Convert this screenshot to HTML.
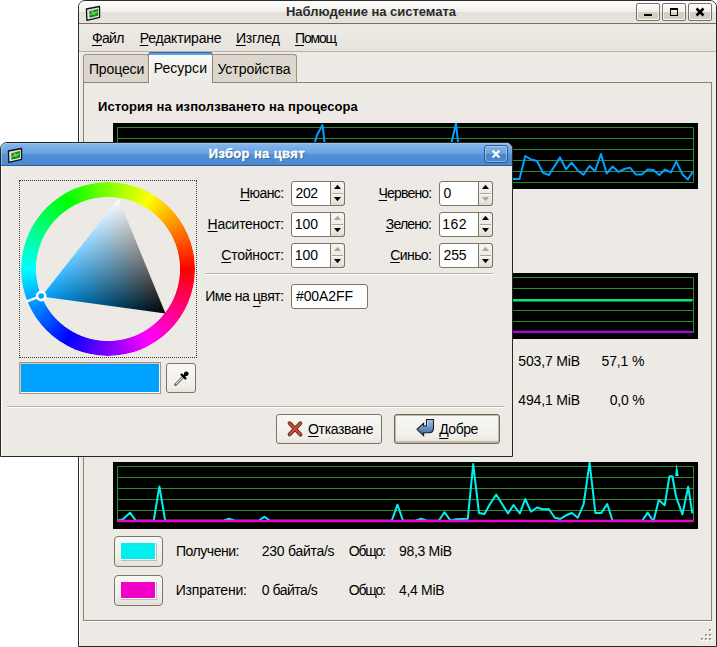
<!DOCTYPE html>
<html><head><meta charset="utf-8">
<style>
*{box-sizing:border-box}
html,body{margin:0;padding:0}
body{width:717px;height:647px;position:relative;overflow:hidden;background:#fff;font-family:"Liberation Sans",sans-serif;font-size:14px;color:#000}
.a{position:absolute}
.t{position:absolute;white-space:pre;line-height:1;}
.b{font-weight:bold}
u{text-decoration:underline;text-decoration-thickness:1px;text-underline-offset:2.4px;text-decoration-skip-ink:none}
</style></head><body>

<!-- ===== MAIN WINDOW ===== -->
<div class="a" style="left:78px;top:0;width:639px;height:647px;background:#edeae5;border:1px solid #2b2a28;border-radius:7px 7px 0 0;"></div>
<div class="a" style="left:79px;top:24px;width:1px;height:622px;background:#fff"></div>
<!-- title bar -->
<div class="a" style="left:79px;top:1px;width:637px;height:22px;border-radius:6px 6px 0 0;background:linear-gradient(#fdfdfc,#f2f0ec 48%,#e5e1da 50%,#e7e3dd)"></div>
<div class="a" style="left:79px;top:23px;width:637px;height:1px;background:#756d5e"></div>
<!-- title icon -->
<svg class="a" style="left:85px;top:5px" width="16" height="16" viewBox="0 0 16 16">
 <defs><linearGradient id="scr" x1="0" y1="1" x2="1" y2="0"><stop offset="0" stop-color="#005c00"/><stop offset="0.5" stop-color="#1a9a1a"/><stop offset="1" stop-color="#0a7a0a"/></linearGradient></defs>
 <path d="M1.4 4 L14.5 1.5 L14.6 12.4 L1.9 15.3 Z" fill="#e4e4e4" stroke="#101010" stroke-width="1.3" stroke-linejoin="round"/>
 <path d="M4.3 6.3 L12.9 4.1 L13.1 10.7 L4.6 12.4 Z" fill="url(#scr)"/>
 <path d="M5 10.2 L6.8 9 L7.8 6.8 L8.8 9.3 L10.3 7.6 L12.4 6.6" fill="none" stroke="#7fe07f" stroke-width="1.2" opacity=".9"/>
</svg>
<div class="t b" style="left:286.00px;top:5px;color:#2a2a2a;font-size:13px;letter-spacing:-0.023px">Наблюдение на системата</div>
<!-- window buttons -->
<div class="a" style="left:636px;top:3px;width:24px;height:18px;border:1px solid #75736e;border-radius:2px;background:linear-gradient(#fcfcfb,#f0eeea 50%,#d6cec1 51%,#d6cec1 90%,#ece8e2);box-shadow:inset 0 0 0 1px rgba(255,255,255,.6)"></div>
<div class="a" style="left:662px;top:3px;width:24px;height:18px;border:1px solid #75736e;border-radius:2px;background:linear-gradient(#fcfcfb,#f0eeea 50%,#d6cec1 51%,#d6cec1 90%,#ece8e2);box-shadow:inset 0 0 0 1px rgba(255,255,255,.6)"></div>
<div class="a" style="left:688px;top:3px;width:24px;height:18px;border:1px solid #75736e;border-radius:2px;background:linear-gradient(#fcfcfb,#f0eeea 50%,#d6cec1 51%,#d6cec1 90%,#ece8e2);box-shadow:inset 0 0 0 1px rgba(255,255,255,.6)"></div>
<div class="a" style="left:644px;top:14px;width:8px;height:2px;background:#000"></div>
<div class="a" style="left:670px;top:8px;width:8px;height:8px;border:1px solid #000;border-top-width:2px"></div>
<svg class="a" style="left:695px;top:7px" width="10" height="10" viewBox="0 0 10 10"><path d="M1.5 1.5L8.5 8.5M8.5 1.5L1.5 8.5" stroke="#000" stroke-width="2.5"/></svg>

<!-- menubar -->
<div class="a" style="left:79px;top:24px;width:637px;height:27px;background:linear-gradient(#eeebe6,#e7e3dd)"></div>
<div class="a" style="left:79px;top:51px;width:637px;height:1px;background:#b9b1a4"></div>
<div class="t" style="left:91.90px;top:30.5px;letter-spacing:-0.633px"><u>Ф</u>айл</div>
<div class="t" style="left:139.70px;top:30.5px;letter-spacing:-0.190px"><u>Р</u>едактиране</div>
<div class="t" style="left:235.90px;top:30.5px;letter-spacing:-0.220px"><u>И</u>зглед</div>
<div class="t" style="left:295.00px;top:30.5px;letter-spacing:-1.200px"><u>П</u>омощ</div>

<!-- tabs -->
<div class="a" style="left:83px;top:54px;width:66px;height:29px;background:#dcd6cd;border:1px solid #9a9282;border-bottom:none;border-radius:3px 3px 0 0"></div>
<div class="a" style="left:211px;top:54px;width:86px;height:29px;background:#dcd6cd;border:1px solid #9a9282;border-bottom:none;border-radius:3px 3px 0 0"></div>
<div class="a" style="left:83px;top:82px;width:629px;height:539px;border:1px solid #8a8272;background:#edeae5"></div>
<div class="a" style="left:84px;top:621px;width:628px;height:1px;background:#fff"></div>
<div class="a" style="left:148px;top:52px;width:65px;height:31px;background:linear-gradient(#5c9ddf,#5c9ddf 2px,#fbfbf9 2px,#f1efeb 60%,#ecebe6);border:1px solid #8d8574;border-top-color:#2f67a8;border-bottom:none;border-radius:3px 3px 0 0"></div>
<div class="a" style="left:149px;top:55px;width:1px;height:27px;background:#fff"></div>
<div class="t" style="left:88.90px;top:61.5px;letter-spacing:-0.117px">Процеси</div>
<div class="t" style="left:153.70px;top:60.5px;letter-spacing:0.050px">Ресурси</div>
<div class="t" style="left:217.40px;top:61.5px;letter-spacing:-0.02px">Устройства</div>

<!-- resize grip -->
<svg class="a" style="left:700px;top:628px" width="14" height="14">
 <g><rect x="10" y="2" width="2" height="2" fill="#fff"/><path d="M9 1h2.2l-2.2 2.2z" fill="#857d6c"/><rect x="9" y="1" width="1.6" height="1.6" fill="#8f8775"/><rect x="6" y="7" width="2" height="2" fill="#fff"/><path d="M5 6h2.2l-2.2 2.2z" fill="#857d6c"/><rect x="5" y="6" width="1.6" height="1.6" fill="#8f8775"/><rect x="10" y="7" width="2" height="2" fill="#fff"/><path d="M9 6h2.2l-2.2 2.2z" fill="#857d6c"/><rect x="9" y="6" width="1.6" height="1.6" fill="#8f8775"/><rect x="2" y="11" width="2" height="2" fill="#fff"/><path d="M1 10h2.2l-2.2 2.2z" fill="#857d6c"/><rect x="1" y="10" width="1.6" height="1.6" fill="#8f8775"/><rect x="6" y="11" width="2" height="2" fill="#fff"/><path d="M5 10h2.2l-2.2 2.2z" fill="#857d6c"/><rect x="5" y="10" width="1.6" height="1.6" fill="#8f8775"/><rect x="10" y="11" width="2" height="2" fill="#fff"/><path d="M9 10h2.2l-2.2 2.2z" fill="#857d6c"/><rect x="9" y="10" width="1.6" height="1.6" fill="#8f8775"/></g>
</svg>

<!-- content -->
<div class="t b" style="left:98.00px;top:100px;font-size:13px;letter-spacing:0.089px">История на използването на процесора</div>

<!-- graph 1 -->
<svg class="a" style="left:113px;top:123px" width="585" height="66">
 <rect width="585" height="66" fill="#000"/>
 <g stroke="#2e8b2e" stroke-width="1" fill="none">
  <path d="M4.5 4.5H580.5V59.5H4.5Z"/>
  <path d="M4.5 15.5H580.5M4.5 26.5H580.5M4.5 37.5H580.5M4.5 48.5H580.5"/>
 </g>
 <polyline fill="none" stroke="#00a2ff" stroke-width="2" stroke-linejoin="round" points="202,19 204,12 209.5,2 211.5,19"/>
 <polyline fill="none" stroke="#00a2ff" stroke-width="2" stroke-linejoin="round" points="338.6,19 343,0.5 345,19"/>
 <polyline fill="none" stroke="#00a2ff" stroke-width="2" stroke-linejoin="round" points="395,56 406.5,56 412.3,33 418,36.5 424,38 430,49.8 436,52 447,34.4 453,46.3 458.6,39.6 465,47.7 470.5,51.6 476.5,43 482,48 488,31 493.7,50.5 499.6,43.5 505.5,48.8 511.4,46 517,44.6 523,51.6 528.8,51.6 534.7,46.6 540.4,47 546.3,51.9 552,46.6 557.9,49.4 563.4,38.6 569.3,51.2 574.9,56.5 579.7,48.8"/>
</svg>

<!-- graph 2 -->
<svg class="a" style="left:113px;top:273px" width="585" height="66">
 <rect width="585" height="66" fill="#000"/>
 <g stroke="#2e8b2e" stroke-width="1" fill="none">
  <path d="M4.5 4.5H580.5V59.5H4.5Z"/>
  <path d="M4.5 15.5H580.5M4.5 26.5H580.5M4.5 37.5H580.5M4.5 48.5H580.5"/>
 </g>
 <path d="M4.5 27.4H579.5" stroke="#00f07a" stroke-width="2.3"/>
 <path d="M4.5 58.9H579.5" stroke="#b000f0" stroke-width="2.1"/>
</svg>
<div class="t" style="left:518.30px;top:353.5px;letter-spacing:-0.162px">503,7 MiB</div>
<div class="t" style="left:601.50px;top:353.5px;letter-spacing:-0.120px">57,1 %</div>
<div class="t" style="left:518.30px;top:392.5px;letter-spacing:-0.162px">494,1 MiB</div>
<div class="t" style="left:609.70px;top:392.5px;letter-spacing:-0.200px">0,0 %</div>

<!-- graph 3 -->
<svg class="a" style="left:113px;top:462px" width="585" height="67">
 <rect width="585" height="67" fill="#000"/>
 <g stroke="#2e8b2e" stroke-width="1" fill="none">
  <path d="M4.5 4.5H580.5V59.5H4.5Z"/>
  <path d="M4.5 15.5H580.5M4.5 26.5H580.5M4.5 37.5H580.5M4.5 48.5H580.5"/>
 </g>
 <polyline fill="none" stroke="#00f0f0" stroke-width="2" stroke-linejoin="round" points="4.5,58.8 10,57.3 17,50.7 23,58.8 40.7,58.8 46.4,24.4 52.2,58.8 110.5,58.8 116,56.8 121.8,58.8 145.6,58.8 151.4,54.7 157,58.8 278.7,58.8 284.5,42.7 290,58.8 302.6,58.8 308.1,56.8 313.9,58.8 325.7,58.8 331.4,50.2 337.7,58.8 343,57.3 354.8,56.7 360.2,2 366,51.1 371.5,52 377.3,41.5 383.2,32.5 395,51.5 400.5,43 406.8,51.5 412.2,37 418,49.7 424,45.5 429.5,47.3 435.8,47 441.8,55.7 447.2,57 453,53.3 458.9,51 464.8,55.7 470.6,42.4 476.6,0.7 482.4,51.1 488.2,51.1 494.2,42 499.6,58.8 529.2,58.8 534.6,50.6 540.4,59.5 545.8,37.9 551.7,43.3 556.4,14.3 559.4,14.3 563,34.3 569.4,52.4 575.2,24.8 579.4,51.5"/>
 <polygon points="562.2,14 563.4,1.6 565.8,14" fill="#00f0f0"/>
 <path d="M4.5 59H580.5" stroke="#f000c8" stroke-width="2.4"/>
</svg>
<!-- legend buttons -->
<div class="a" style="left:114px;top:536px;width:49px;height:31px;border:1px solid #7d7566;border-radius:4px;background:linear-gradient(#f8f7f4,#efede8 70%,#e4e0d8)"></div>
<div class="a" style="left:121px;top:543px;width:36px;height:18px;border-right:1px solid #c2bdb3;border-bottom:1px solid #c2bdb3;background:#00f0f0;box-shadow:inset -1px -1px 0 #fff"></div>
<div class="a" style="left:114px;top:575px;width:49px;height:31px;border:1px solid #7d7566;border-radius:4px;background:linear-gradient(#f8f7f4,#efede8 70%,#e4e0d8)"></div>
<div class="a" style="left:121px;top:582px;width:36px;height:18px;border-right:1px solid #c2bdb3;border-bottom:1px solid #c2bdb3;background:#f000c8;box-shadow:inset -1px -1px 0 #fff"></div>
<div class="t" style="left:176.00px;top:543.5px;letter-spacing:-0.475px">Получени:</div>
<div class="t" style="left:261.80px;top:543.5px;letter-spacing:-0.270px">230 байта/s</div>
<div class="t" style="left:348.75px;top:543.5px;letter-spacing:-1.200px">Общо:</div>
<div class="t" style="left:398.90px;top:543.5px;letter-spacing:-0.286px">98,3 MiB</div>
<div class="t" style="left:175.70px;top:582.5px;letter-spacing:-0.167px">Изпратени:</div>
<div class="t" style="left:261.80px;top:582.5px;letter-spacing:-0.488px">0 байта/s</div>
<div class="t" style="left:348.75px;top:582.5px;letter-spacing:-1.200px">Общо:</div>
<div class="t" style="left:398.90px;top:582.5px;letter-spacing:-0.300px">4,4 MiB</div>

<!-- ===== DIALOG ===== -->
<div id="dlg" class="a" style="left:0;top:142px;width:513px;height:315px;background:#edeae5;border:1px solid #262626;border-radius:7px 7px 0 0"></div>
<div class="a" style="left:1px;top:143px;width:511px;height:22px;border-radius:6px 6px 0 0;background:linear-gradient(#a6cbf3,#80b3ea 8%,#6ca3e0 45%,#5190d6 55%,#4b8ad2);box-shadow:inset 1px 0 0 rgba(255,255,255,.35)"></div>
<div class="a" style="left:1px;top:165px;width:511px;height:1px;background:#2f5f96"></div>
<div class="a" style="left:1px;top:166px;width:1px;height:290px;background:#fff"></div>
<svg class="a" style="left:7px;top:147px" width="16" height="16" viewBox="0 0 16 16">
 <defs><linearGradient id="scr2" x1="0" y1="1" x2="1" y2="0"><stop offset="0" stop-color="#005c00"/><stop offset="0.5" stop-color="#1a9a1a"/><stop offset="1" stop-color="#0a7a0a"/></linearGradient></defs>
 <path d="M1.4 4 L14.5 1.5 L14.6 12.4 L1.9 15.3 Z" fill="#e4e4e4" stroke="#101010" stroke-width="1.3" stroke-linejoin="round"/>
 <path d="M4.3 6.3 L12.9 4.1 L13.1 10.7 L4.6 12.4 Z" fill="url(#scr2)"/>
 <path d="M5 10.2 L6.8 9 L7.8 6.8 L8.8 9.3 L10.3 7.6 L12.4 6.6" fill="none" stroke="#7fe07f" stroke-width="1.2" opacity=".9"/>
</svg>
<div class="t b" style="left:208.70px;top:147px;color:#fff;-webkit-text-stroke:0.35px #fff;text-shadow:1px 1px 0.6px rgba(20,40,80,.6);font-size:13px;letter-spacing:0.367px">Избор на цвят</div>
<div class="a" style="left:484px;top:145px;width:24px;height:18px;border:1px solid #2f5a8a;border-radius:3px;background:linear-gradient(#7eb0e6,#6aa2df 50%,#4a84c6 51%,#4d88ca);box-shadow:inset 0 0 0 1px rgba(255,255,255,.35)"></div>
<svg class="a" style="left:491px;top:149px" width="10" height="10" viewBox="0 0 10 10"><path d="M1.5 1.5L8.5 8.5M8.5 1.5L1.5 8.5" stroke="#fff" stroke-width="2.2"/></svg>

<!-- color wheel -->
<div class="a" style="left:19px;top:180px;width:178px;height:178px;border:1px dotted #3a3a3a"></div>
<div class="a" style="left:21px;top:182px;width:174px;height:174px;border-radius:50%;background:conic-gradient(from 90deg,#f00,#f0f,#00f,#0ff,#0f0,#ff0,#f00);-webkit-mask:radial-gradient(circle closest-side,transparent 71.6px,#000 72.4px);mask:radial-gradient(circle closest-side,transparent 71.6px,#000 72.4px)"></div>
<svg class="a" style="left:21px;top:182px" width="174" height="174" viewBox="0 0 174 174">
 <defs>
  <linearGradient id="gH" gradientUnits="userSpaceOnUse" x1="20.5" y1="114.5" x2="120.8" y2="73.5"><stop offset="0" stop-color="#00a2ff"/><stop offset="1" stop-color="#000"/></linearGradient>
  <linearGradient id="gW" gradientUnits="userSpaceOnUse" x1="97.5" y1="16.5" x2="82.9" y2="123.05"><stop offset="0" stop-color="#fff"/><stop offset="1" stop-color="#000"/></linearGradient>
  <clipPath id="ring"><path fill-rule="evenodd" d="M87 0A87 87 0 1 1 86.99 0ZM87 15A72 72 0 1 0 87.01 15Z"/></clipPath>
 </defs>
 <clipPath id="tri"><polygon points="20.5,114.5 97.5,16.5 144.5,131.5"/></clipPath>
 <g style="isolation:isolate" clip-path="url(#tri)">
  <rect x="0" y="0" width="174" height="174" fill="url(#gH)"/>
  <rect x="0" y="0" width="174" height="174" fill="url(#gW)" style="mix-blend-mode:plus-lighter"/>
 </g>
 <line x1="20.24" y1="113.97" x2="5.34" y2="119.59" stroke="#fff" stroke-width="2.4"/>
 <circle cx="20.2" cy="114" r="4.1" fill="#00a2ff" stroke="#fff" stroke-width="2.6"/>
</svg>
<!-- swatch + eyedropper -->
<div class="a" style="left:19px;top:362px;width:142px;height:32px;border:1px solid #a1978a;box-shadow:inset 1px 1px 0 #d6cab6,inset -1px -1px 0 #fff;background:#00a2ff"></div>
<div class="a" style="left:166px;top:363px;width:30px;height:30px;border:1px solid #7d7566;border-radius:3px;background:linear-gradient(#f8f7f4,#f0eee9 80%,#e6e2db)"></div>
<svg class="a" style="left:173px;top:370px" width="17" height="17" viewBox="0 0 17 17">
 <path d="M2.6 14.6 L11 6.2" stroke="#3a3a3a" stroke-width="2.6" stroke-linecap="round"/>
 <path d="M3 14.2 L10.6 6.6" stroke="#fafafa" stroke-width="1.1" stroke-linecap="round"/>
 <path d="M8.6 4.6 L12.4 8.4" stroke="#000" stroke-width="2.2" stroke-linecap="round"/>
 <circle cx="13.3" cy="3.7" r="2.3" fill="#000"/>
 <path d="M11 6 L13 4" stroke="#000" stroke-width="2.4"/>
</svg>
<!-- separators -->
<div class="a" style="left:205px;top:273px;width:288px;height:1px;background:#bab4a9"></div>
<div class="a" style="left:205px;top:274px;width:288px;height:1px;background:#fff"></div>
<div class="a" style="left:7px;top:406px;width:498px;height:1px;background:#bab4a9"></div>
<div class="a" style="left:7px;top:407px;width:498px;height:1px;background:#fff"></div>
<div class="a" style="left:291px;top:181px;width:54px;height:25px;border:1px solid #7d7566;border-radius:3px;background:#fff"></div>
<div class="a" style="left:330px;top:181px;width:15px;height:25px;border:1px solid #7d7566;border-radius:0 3px 3px 0;background:linear-gradient(#f5f4f0,#e9e6e0 85%,#dcd8d0)"></div>
<div class="a" style="left:332px;top:193px;width:11px;height:1px;background:#aba699"></div><div class="a" style="left:332px;top:194px;width:11px;height:1px;background:#fbfaf8"></div>
<svg class="a" style="left:333px;top:181px" width="9" height="25" viewBox="0 0 9 25"><path d="M1 8L4.5 3.8L8 8Z" fill="#000"/><path d="M1 16L4.5 20.2L8 16Z" fill="#000"/></svg>
<div class="t" style="left:295.50px;top:185.5px;letter-spacing:-0.350px">202</div>
<div class="a" style="left:439px;top:181px;width:54px;height:25px;border:1px solid #7d7566;border-radius:3px;background:#fff"></div>
<div class="a" style="left:478px;top:181px;width:15px;height:25px;border:1px solid #7d7566;border-radius:0 3px 3px 0;background:linear-gradient(#f5f4f0,#e9e6e0 85%,#dcd8d0)"></div>
<div class="a" style="left:480px;top:193px;width:11px;height:1px;background:#aba699"></div><div class="a" style="left:480px;top:194px;width:11px;height:1px;background:#fbfaf8"></div>
<svg class="a" style="left:481px;top:181px" width="9" height="25" viewBox="0 0 9 25"><path d="M1 8L4.5 3.8L8 8Z" fill="#000"/><path d="M1 16L4.5 20.2L8 16Z" fill="#aaa69e"/></svg>
<div class="t" style="left:443.60px;top:185.5px;letter-spacing:-1.200px">0</div>
<div class="t" style="top:185.5px;left:240.05px;letter-spacing:-0.600px"><u>Н</u>юанс:</div>
<div class="t" style="top:185.5px;left:378.61px;letter-spacing:-0.843px"><u>Ч</u>ервено:</div>
<div class="a" style="left:291px;top:212px;width:54px;height:25px;border:1px solid #7d7566;border-radius:3px;background:#fff"></div>
<div class="a" style="left:330px;top:212px;width:15px;height:25px;border:1px solid #7d7566;border-radius:0 3px 3px 0;background:linear-gradient(#f5f4f0,#e9e6e0 85%,#dcd8d0)"></div>
<div class="a" style="left:332px;top:224px;width:11px;height:1px;background:#aba699"></div><div class="a" style="left:332px;top:225px;width:11px;height:1px;background:#fbfaf8"></div>
<svg class="a" style="left:333px;top:212px" width="9" height="25" viewBox="0 0 9 25"><path d="M1 8L4.5 3.8L8 8Z" fill="#aaa69e"/><path d="M1 16L4.5 20.2L8 16Z" fill="#000"/></svg>
<div class="t" style="left:294.70px;top:216.5px;letter-spacing:0.050px">100</div>
<div class="a" style="left:439px;top:212px;width:54px;height:25px;border:1px solid #7d7566;border-radius:3px;background:#fff"></div>
<div class="a" style="left:478px;top:212px;width:15px;height:25px;border:1px solid #7d7566;border-radius:0 3px 3px 0;background:linear-gradient(#f5f4f0,#e9e6e0 85%,#dcd8d0)"></div>
<div class="a" style="left:480px;top:224px;width:11px;height:1px;background:#aba699"></div><div class="a" style="left:480px;top:225px;width:11px;height:1px;background:#fbfaf8"></div>
<svg class="a" style="left:481px;top:212px" width="9" height="25" viewBox="0 0 9 25"><path d="M1 8L4.5 3.8L8 8Z" fill="#000"/><path d="M1 16L4.5 20.2L8 16Z" fill="#000"/></svg>
<div class="t" style="left:442.30px;top:216.5px;letter-spacing:0.450px">162</div>
<div class="t" style="top:216.5px;left:207.61px;letter-spacing:-0.300px"><u>Н</u>аситеност:</div>
<div class="t" style="top:216.5px;left:385.74px;letter-spacing:-0.817px"><u>З</u>елено:</div>
<div class="a" style="left:291px;top:243px;width:54px;height:25px;border:1px solid #7d7566;border-radius:3px;background:#fff"></div>
<div class="a" style="left:330px;top:243px;width:15px;height:25px;border:1px solid #7d7566;border-radius:0 3px 3px 0;background:linear-gradient(#f5f4f0,#e9e6e0 85%,#dcd8d0)"></div>
<div class="a" style="left:332px;top:255px;width:11px;height:1px;background:#aba699"></div><div class="a" style="left:332px;top:256px;width:11px;height:1px;background:#fbfaf8"></div>
<svg class="a" style="left:333px;top:243px" width="9" height="25" viewBox="0 0 9 25"><path d="M1 8L4.5 3.8L8 8Z" fill="#aaa69e"/><path d="M1 16L4.5 20.2L8 16Z" fill="#000"/></svg>
<div class="t" style="left:294.70px;top:247.5px;letter-spacing:0.050px">100</div>
<div class="a" style="left:439px;top:243px;width:54px;height:25px;border:1px solid #7d7566;border-radius:3px;background:#fff"></div>
<div class="a" style="left:478px;top:243px;width:15px;height:25px;border:1px solid #7d7566;border-radius:0 3px 3px 0;background:linear-gradient(#f5f4f0,#e9e6e0 85%,#dcd8d0)"></div>
<div class="a" style="left:480px;top:255px;width:11px;height:1px;background:#aba699"></div><div class="a" style="left:480px;top:256px;width:11px;height:1px;background:#fbfaf8"></div>
<svg class="a" style="left:481px;top:243px" width="9" height="25" viewBox="0 0 9 25"><path d="M1 8L4.5 3.8L8 8Z" fill="#aaa69e"/><path d="M1 16L4.5 20.2L8 16Z" fill="#000"/></svg>
<div class="t" style="left:443.60px;top:247.5px;letter-spacing:-0.200px">255</div>
<div class="t" style="top:247.5px;left:221.29px;letter-spacing:-0.238px"><u>С</u>тойност:</div>
<div class="t" style="top:247.5px;left:390.24px;letter-spacing:-0.580px"><u>С</u>иньо:</div>

<div class="t" style="left:205.20px;top:288.5px;letter-spacing:-0.455px">Име на <u style="text-underline-offset:4.6px">ц</u>вят:</div>
<div class="a" style="left:291px;top:284px;width:77px;height:25px;border:1px solid #7d7566;border-radius:3px;background:#fff"></div>
<div class="t" style="left:296.00px;top:288.5px;letter-spacing:-0.100px">#00A2FF</div>
<!-- buttons -->
<div class="a" style="left:276px;top:414px;width:106px;height:30px;border:1px solid #7d7566;border-radius:3px;background:linear-gradient(#f8f7f4,#f0eee9 80%,#e6e2db)"></div>
<svg class="a" style="left:284px;top:417px" width="22" height="23" viewBox="0 0 22 23">
 <path d="M5.6 6.2L16.5 17.6M16.3 6.4L5.6 17.4" stroke="#3a302a" stroke-width="3.9" stroke-linecap="round"/>
 <path d="M5.6 6.2L16.5 17.6M16.3 6.4L5.6 17.4" stroke="#d8452b" stroke-width="2.3" stroke-linecap="round"/>
</svg>
<div class="t" style="left:308.10px;top:421.5px;letter-spacing:-0.375px"><u>О</u>тказване</div>
<div class="a" style="left:394px;top:414px;width:106px;height:30px;border:1px solid #6f6757;border-radius:3px;background:#c4b9a6"></div>
<div class="a" style="left:396px;top:416px;width:102px;height:25px;border-radius:1px;background:linear-gradient(#f7f6f3,#f1efeb 80%,#e9e6e0)"></div>
<svg class="a" style="left:412px;top:414px" width="26" height="26" viewBox="0 0 26 26">
 <defs><linearGradient id="okg" x1="0" y1="0" x2="0" y2="1"><stop offset="0" stop-color="#a9c6e4"/><stop offset="0.5" stop-color="#6b95c0"/><stop offset="1" stop-color="#35618f"/></linearGradient></defs>
 <path d="M14.5 5.5H21.5V14Q21.5 18.7 17 18.7H11.6V21.7L5 15.3L11.6 9.2V12H14.5Z" fill="url(#okg)" stroke="#141c26" stroke-width="1.1" stroke-linejoin="miter"/>
 <path d="M15.6 6.6V12.2" stroke="#d4e4f4" stroke-width="1" opacity=".8"/>
</svg>
<div class="t" style="left:439.20px;top:421.5px;letter-spacing:-0.475px"><u style="text-underline-offset:4.4px">Д</u>обре</div>

</body></html>
